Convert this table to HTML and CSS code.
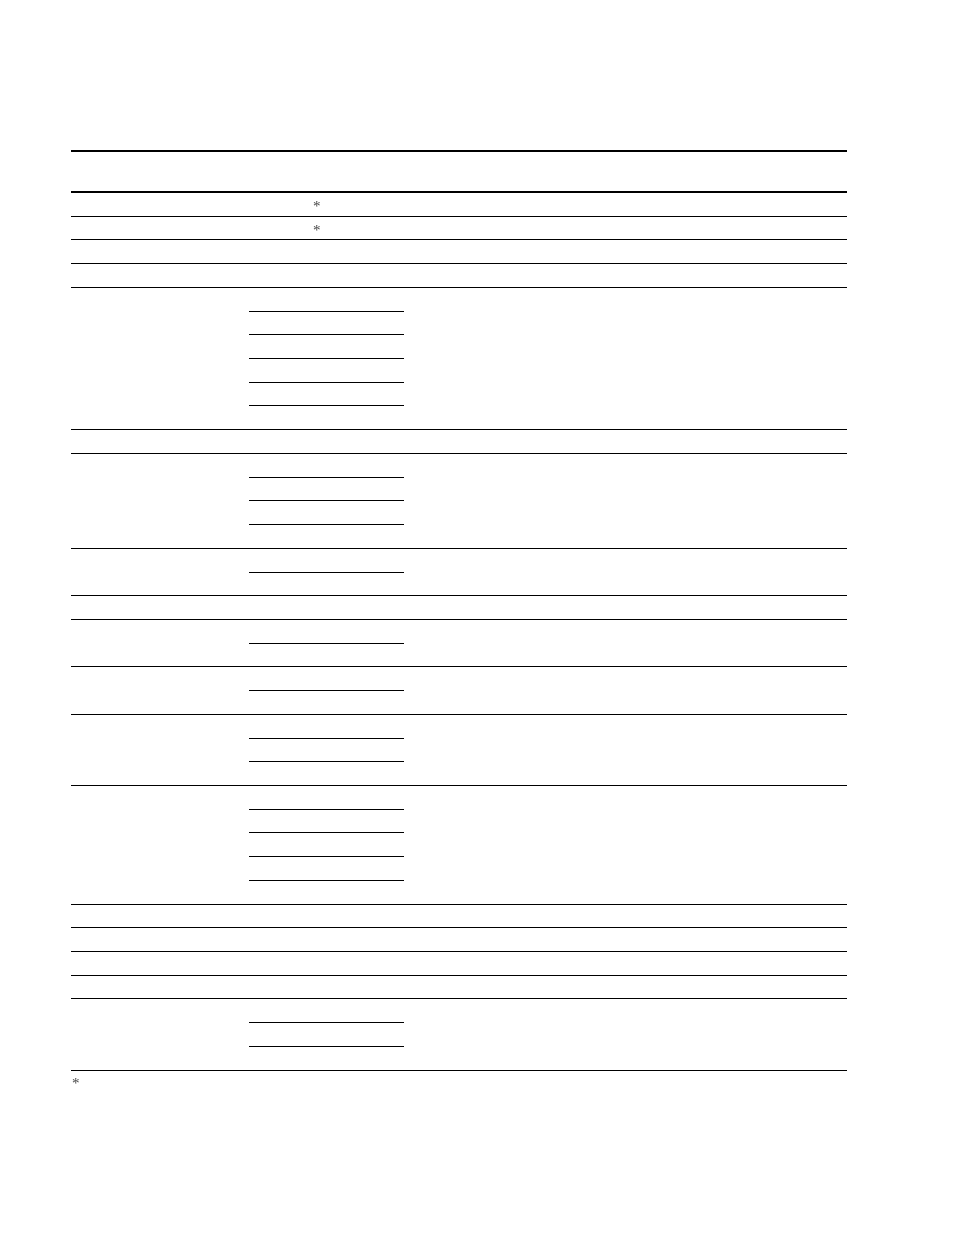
FILE: index.html
```html
<!DOCTYPE html>
<html>
<head>
<meta charset="utf-8">
<link rel="stylesheet" href="styles.css">
</head>
<body>
<div class="sheet">
  <div class="table">
    <div class="head"></div>
    <div class="row u1"><div class="c1"></div><div class="c2"><span class="ast">*</span></div></div>
    <div class="row u1"><div class="c1"></div><div class="c2"><span class="ast">*</span></div></div>
    <div class="row u1"></div>
    <div class="row u1"></div>
    <div class="row"><div class="c1"></div><div class="c2"><div class="sub"></div><div class="sub"></div><div class="sub"></div><div class="sub"></div><div class="sub"></div><div class="last"></div></div></div>
    <div class="row u1"></div>
    <div class="row"><div class="c1"></div><div class="c2"><div class="sub"></div><div class="sub"></div><div class="sub"></div><div class="last"></div></div></div>
    <div class="row"><div class="c1"></div><div class="c2"><div class="sub"></div><div class="last"></div></div></div>
    <div class="row u1"></div>
    <div class="row"><div class="c1"></div><div class="c2"><div class="sub"></div><div class="last"></div></div></div>
    <div class="row"><div class="c1"></div><div class="c2"><div class="sub"></div><div class="last"></div></div></div>
    <div class="row"><div class="c1"></div><div class="c2"><div class="sub"></div><div class="sub"></div><div class="last"></div></div></div>
    <div class="row"><div class="c1"></div><div class="c2"><div class="sub"></div><div class="sub"></div><div class="sub"></div><div class="sub"></div><div class="last"></div></div></div>
    <div class="row u1"></div>
    <div class="row u1"></div>
    <div class="row u1"></div>
    <div class="row u1"></div>
    <div class="row"><div class="c1"></div><div class="c2"><div class="sub"></div><div class="sub"></div><div class="last"></div></div></div>
  </div>
  <div class="note"><span class="ast">*</span></div>
</div>
</body>
</html>
```

FILE: styles.css
```css
html, body {
  margin: 0;
  padding: 0;
  background: #fff;
}
body {
  font-family: "Liberation Serif", "Times New Roman", serif;
  color: #000;
}
.sheet {
  padding-top: 150px;
  padding-left: 71px;
  width: 776px;
}
.table {
  display: flex;
  flex-direction: column;
}
.head {
  box-sizing: border-box;
  height: 43px;
  border-top: 2px solid #000;
  border-bottom: 2px solid #000;
}
.row {
  display: flex;
  box-sizing: border-box;
  border-bottom: 1px solid #000;
}
.row.u1 {
  height: 23.73px;
}
.c1 {
  width: 178px;
  flex: none;
}
.c2 {
  width: 155px;
  flex: none;
  display: flex;
  flex-direction: column;
}
.sub {
  box-sizing: border-box;
  height: 23.73px;
  border-bottom: 1px solid #000;
}
.last {
  height: 22.73px;
}
.ast {
  display: inline-block;
  color: #444;
  font-size: 15px;
  line-height: 22px;
  padding-left: 64px;
  padding-top: 2px;
  -webkit-font-smoothing: antialiased;
  will-change: transform;
}
.note {
  height: 24px;
}
.note .ast {
  padding-left: 1px;
  padding-top: 2px;
  line-height: 20px;
}
```
